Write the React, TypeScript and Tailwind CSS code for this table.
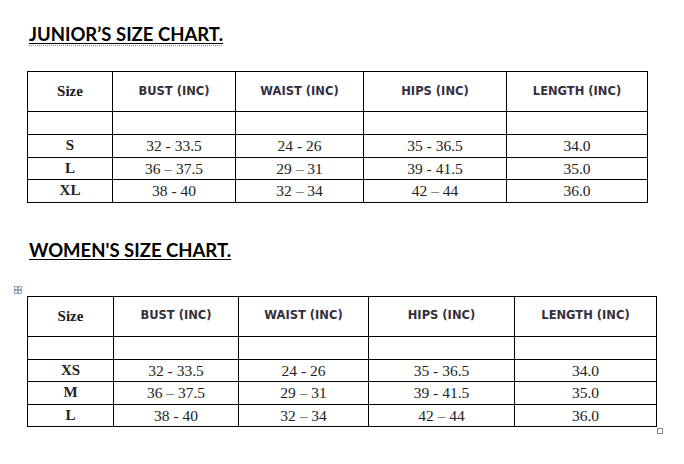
const headers = ['BUST (INC)', 'WAIST (INC)', 'HIPS (INC)', 'LENGTH (INC)'];

const juniorRows = [
  ['S', '32 - 33.5', '24 - 26', '35 - 36.5', '34.0'],
  ['L', '36 \u2013 37.5', '29 \u2013 31', '39 - 41.5', '35.0'],
  ['XL', '38 - 40', '32 \u2013 34', '42 \u2013 44', '36.0'],
];

const womenRows = [
  ['XS', '32 - 33.5', '24 - 26', '35 - 36.5', '34.0'],
  ['M', '36 \u2013 37.5', '29 \u2013 31', '39 - 41.5', '35.0'],
  ['L', '38 - 40', '32 \u2013 34', '42 \u2013 44', '36.0'],
];

function SizeTable({ widths, rows }: { widths: number[]; rows: string[][] }) {
  return (
    <table className="border-collapse table-fixed" style={{ width: widths.reduce((a, b) => a + b, 0) }}>
      <colgroup>
        {widths.map((w, i) => (
          <col key={i} style={{ width: w }} />
        ))}
      </colgroup>
      <tbody>
        <tr className="h-[40px]">
          <td className="border border-black text-center font-bold text-[15px] text-[#1a1a1a] font-['Liberation_Serif',serif]">
            Size
          </td>
          {headers.map((h) => (
            <td
              key={h}
              className="border border-black text-center font-bold text-[11.5px] text-[#352f3d] font-['DejaVu_Sans',sans-serif]"
            >
              {h}
            </td>
          ))}
        </tr>
        <tr className="h-[23px]">
          {widths.map((_, i) => (
            <td key={i} className="border border-black" />
          ))}
        </tr>
        {rows.map((row) => (
          <tr key={row[0]} className="h-[22.5px]">
            {row.map((cell, i) => (
              <td
                key={i}
                className={`border border-black text-center leading-none font-['Liberation_Serif',serif] text-[#222] ${
                  i === 0 ? 'font-bold text-[15px]' : 'text-[15.5px]'
                }`}
              >
                {cell}
              </td>
            ))}
          </tr>
        ))}
      </tbody>
    </table>
  );
}

export default function App() {
  return (
    <div className="relative w-[684px] h-[464px] bg-white overflow-hidden">
      <div className="flex flex-col pl-[27px] pt-[22px]">
        {/* Junior chart */}
        <h1 className="ml-[2px] text-[18.5px] leading-[24px] font-bold text-black font-['Lato',sans-serif]">
          <span className="inline-flex flex-col">
            <span className="underline decoration-1 underline-offset-[2px]">JUNIOR&rsquo;S SIZE CHART.</span>
            <span className="h-[1px] -mt-[1px] bg-[repeating-linear-gradient(90deg,#5aa84e_0_1px,transparent_1px_2px)]" />
          </span>
        </h1>
        <div className="mt-[25px]">
          <SizeTable widths={[85, 123, 128, 143, 141]} rows={juniorRows} />
        </div>

        {/* Women chart */}
        <h1 className="ml-[2px] mt-[35px] text-[18.5px] leading-[24px] font-bold text-black font-['Lato',sans-serif] underline decoration-1 underline-offset-[2px]">
          WOMEN'S SIZE CHART.
        </h1>
        <div className="mt-[34px]">
          <SizeTable widths={[86, 125, 130, 146, 142]} rows={womenRows} />
        </div>
      </div>

      {/* table move handle */}
      <div className="absolute left-[14px] top-[286px] w-[8px] h-[8px] border border-[#9aaecb] bg-white flex items-center justify-center">
        <svg width="6" height="6" viewBox="0 0 6 6" className="text-[#3b5d9a]">
          <path d="M3 0 V6 M0 3 H6" stroke="currentColor" strokeWidth="0.8" />
          <path d="M3 0 L2 1 H4 Z M3 6 L2 5 H4 Z M0 3 L1 2 V4 Z M6 3 L5 2 V4 Z" fill="currentColor" />
        </svg>
      </div>
      {/* resize handle */}
      <div className="absolute left-[657px] top-[428px] w-[6px] h-[6px] border border-[#888]" />
    </div>
  );
}
